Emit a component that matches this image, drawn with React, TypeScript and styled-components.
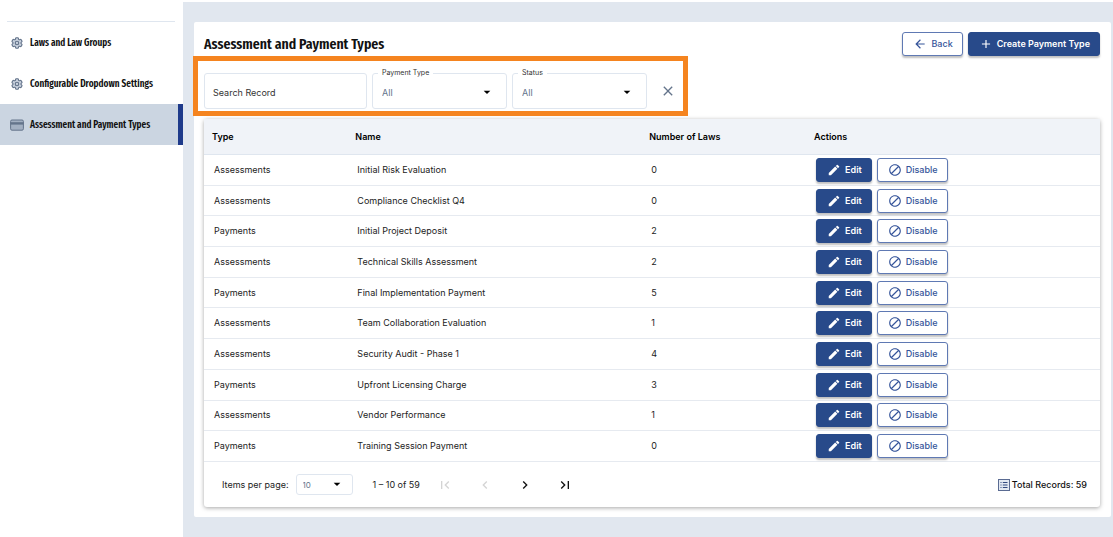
import React from "react";
import styled, { createGlobalStyle, css } from "styled-components";
import { HiOutlineCog6Tooth } from "react-icons/hi2";
import {
  MdAdd,
  MdArrowBack,
  MdArrowDropDown,
  MdBlock,
  MdChevronLeft,
  MdChevronRight,
  MdClose,
  MdEdit,
  MdFirstPage,
  MdLastPage,
} from "react-icons/md";

const navy = "#284a8a";
const line = "#dfe6ef";
const slate = "#64748b";
const headingFont = `"Fira Sans Extra Condensed", "Roboto Condensed", Roboto, sans-serif`;

const GlobalStyle = createGlobalStyle`
  *, *::before, *::after { box-sizing: border-box; }
  body {
    margin: 0;
    background: #fff;
    color: #222;
    font: 9px/12px Inter, "Liberation Sans", sans-serif;
  }
  button, input, select { font: inherit; }
`;

const Page = styled.div`
  display: flex;
  min-height: 100vh;
  padding-top: 2px;
`;

const Sidebar = styled.nav`
  flex: 0 0 183px;
  padding-top: 19px;
`;

const Divider = styled.hr`
  height: 1px;
  margin: 0 8px 0 7px;
  border: 0;
  background: ${line};
`;

const NavLink = styled.a<{ $active?: boolean }>`
  display: flex;
  align-items: center;
  gap: 6px;
  height: 41px;
  padding-left: 10px;
  border-right: 5px solid transparent;
  color: #111;
  font: 600 10px/14px ${headingFont};
  text-decoration: none;
  white-space: nowrap;
  ${(p) =>
    p.$active &&
    css`
      background: #cbd5e1;
      border-right-color: #1e3a8a;
    `}

  svg {
    width: 14px;
    height: 14px;
    color: ${slate};
    fill: #c9d2de;
    stroke-width: 2;
  }
`;

const Main = styled.main`
  flex: 1;
  min-width: 0;
  padding: 20px 2px 20px 11px;
  background: #e1e7ef;
`;

const Card = styled.section`
  padding: 10px 11px 10px 10px;
  border-radius: 2px;
  background: #fff;
`;

const TitleBar = styled.header`
  display: flex;
  align-items: center;
  justify-content: space-between;
`;

const Title = styled.h1`
  margin: 0;
  color: #111;
  font: 600 15px/20px ${headingFont};
`;

const ButtonGroup = styled.div`
  display: flex;
  gap: 5px;
`;

const Button = styled.button<{ $filled?: boolean }>`
  display: inline-flex;
  align-items: center;
  justify-content: center;
  gap: 4px;
  height: 24px;
  padding: 0 9px 0 10px;
  border: 1px solid ${(p) => (p.$filled ? navy : "#5f79b3")};
  border-radius: 3px;
  background: ${(p) => (p.$filled ? navy : "#fff")};
  color: ${(p) => (p.$filled ? "#fff" : "#35549a")};
  font-weight: ${(p) => (p.$filled ? 600 : 500)};
  white-space: nowrap;
  box-shadow: 0 2px 2px rgba(0, 0, 0, 0.25);

  svg {
    width: 14px;
    height: 14px;
  }
`;

const Filters = styled.form`
  position: relative;
  display: flex;
  align-items: center;
  gap: 5px;
  width: max-content;
  margin: 17px 0 10px;

  &::after {
    content: "";
    position: absolute;
    inset: -17px -12px -7px -11px;
    border: 5px solid #f5841f;
    pointer-events: none;
  }
`;

const SearchInput = styled.input`
  width: 163px;
  height: 36px;
  padding: 2px 8px 0;
  border: 1px solid ${line};
  border-radius: 3px;
  color: #222;

  &::placeholder {
    color: #333;
    opacity: 1;
  }
`;

const SelectBox = styled.div<{ $small?: boolean }>`
  position: relative;
  width: ${(p) => (p.$small ? 57 : 135)}px;

  select {
    display: block;
    width: 100%;
    height: ${(p) => (p.$small ? 21 : 36)}px;
    padding: ${(p) => (p.$small ? "0 6px" : "4px 9px 0")};
    border: 1px solid ${line};
    border-radius: 3px;
    appearance: none;
    background: #fff;
    color: ${slate};
    font-size: ${(p) => (p.$small ? 8 : 9)}px;
  }

  svg {
    position: absolute;
    top: 50%;
    right: ${(p) => (p.$small ? 8 : 12)}px;
    width: 16px;
    height: 16px;
    margin-top: ${(p) => (p.$small ? -9 : -7)}px;
    color: #000;
    pointer-events: none;
  }
`;

const FloatingLabel = styled.label`
  position: absolute;
  top: -5px;
  left: 6px;
  padding: 0 4px;
  background: #fff;
  color: #333;
  font-size: 7px;
  line-height: 10px;
`;

const IconButton = styled.button`
  display: inline-flex;
  align-items: center;
  justify-content: center;
  width: 16px;
  height: 16px;
  padding: 0;
  border: 0;
  background: none;
  color: #111;

  &:disabled {
    color: #d4d4d4;
  }

  svg {
    width: 16px;
    height: 16px;
  }
`;

const ClearButton = styled(IconButton)`
  margin-left: 8px;
  color: ${slate};
`;

const TablePanel = styled.div`
  border-radius: 3px;
  box-shadow: 0 1px 4px rgba(0, 0, 0, 0.35);
`;

const Table = styled.table`
  width: 100%;
  height: 343px;
  border-collapse: separate;
  border-spacing: 0;
  table-layout: fixed;
`;

const HeadCell = styled.th<{ $width?: string }>`
  width: ${(p) => p.$width || "auto"};
  height: 36px;
  padding: 0 8px;
  border-bottom: 1px solid ${line};
  background: #f0f3f8;
  color: #000;
  font-weight: 600;
  text-align: left;
`;

const Cell = styled.td`
  height: 30px;
  padding: 0 10px;
  border-bottom: 1px solid #e6eaf0;
`;

const Paginator = styled.footer`
  display: flex;
  align-items: center;
  height: 45px;
  padding: 0 13px 0 18px;
`;

const PageSizeLabel = styled.label`
  margin-right: 7px;
`;

const Range = styled.span`
  margin: 0 17px 0 20px;
`;

const PageButtons = styled.div`
  display: flex;
  gap: 24px;
`;

const Total = styled.span`
  display: flex;
  align-items: center;
  gap: 2px;
  margin-left: auto;
  color: #111;
  font-weight: 500;
`;

const rows = [
  ["Assessments", "Initial Risk Evaluation", 0],
  ["Assessments", "Compliance Checklist Q4", 0],
  ["Payments", "Initial Project Deposit", 2],
  ["Assessments", "Technical Skills Assessment", 2],
  ["Payments", "Final Implementation Payment", 5],
  ["Assessments", "Team Collaboration Evaluation", 1],
  ["Assessments", "Security Audit - Phase 1", 4],
  ["Payments", "Upfront Licensing Charge", 3],
  ["Assessments", "Vendor Performance", 1],
  ["Payments", "Training Session Payment", 0],
] as const;

function CardIcon() {
  return (
    <svg viewBox="0 0 14 14" aria-hidden="true">
      <rect x="0.6" y="2" width="12.8" height="10.2" rx="1.4" fill="#a3b0c2" stroke="#64748b" strokeWidth="1" />
      <rect x="0.6" y="4.2" width="12.8" height="2.4" fill="#64748b" stroke="none" />
    </svg>
  );
}

function ListIcon() {
  return (
    <svg width="12" height="12" viewBox="0 0 12 12" aria-hidden="true">
      <rect x="0.5" y="0.5" width="11" height="11" fill="#e3e9f3" stroke="#5a6b92" />
      <path d="M2.5 3.5h1M2.5 6h1M2.5 8.5h1M4.8 3.5h4.7M4.8 6h4.7M4.8 8.5h4.7" stroke="#334a80" strokeWidth="1" />
    </svg>
  );
}

function FilterSelect({ id, label }: { id: string; label: string }) {
  return (
    <SelectBox>
      <select id={id}>
        <option>All</option>
      </select>
      <FloatingLabel htmlFor={id}>{label}</FloatingLabel>
      <MdArrowDropDown />
    </SelectBox>
  );
}

export default function App() {
  return (
    <>
      <GlobalStyle />
      <Page>
        <Sidebar>
          <Divider />
          <NavLink href="#laws"><HiOutlineCog6Tooth />Laws and Law Groups</NavLink>
          <NavLink href="#dropdowns"><HiOutlineCog6Tooth />Configurable Dropdown Settings</NavLink>
          <NavLink href="#types" $active aria-current="page"><CardIcon />Assessment and Payment Types</NavLink>
        </Sidebar>
        <Main>
          <Card>
            <TitleBar>
              <Title>Assessment and Payment Types</Title>
              <ButtonGroup>
                <Button type="button"><MdArrowBack />Back</Button>
                <Button type="button" $filled><MdAdd />Create Payment Type</Button>
              </ButtonGroup>
            </TitleBar>
            <Filters>
              <SearchInput type="text" aria-label="Search Record" placeholder="Search Record" />
              <FilterSelect id="payment-type" label="Payment Type" />
              <FilterSelect id="status" label="Status" />
              <ClearButton type="reset" aria-label="Clear filters"><MdClose /></ClearButton>
            </Filters>
            <TablePanel>
              <Table>
                <thead>
                  <tr>
                    <HeadCell $width="16%">Type</HeadCell>
                    <HeadCell $width="32.8%">Name</HeadCell>
                    <HeadCell $width="18.4%">Number of Laws</HeadCell>
                    <HeadCell>Actions</HeadCell>
                  </tr>
                </thead>
                <tbody>
                  {rows.map(([type, name, count]) => (
                    <tr key={name}>
                      <Cell>{type}</Cell>
                      <Cell>{name}</Cell>
                      <Cell>{count}</Cell>
                      <Cell>
                        <ButtonGroup>
                          <Button type="button" $filled><MdEdit />Edit</Button>
                          <Button type="button"><MdBlock />Disable</Button>
                        </ButtonGroup>
                      </Cell>
                    </tr>
                  ))}
                </tbody>
              </Table>
              <Paginator>
                <PageSizeLabel htmlFor="page-size">Items per page:</PageSizeLabel>
                <SelectBox $small>
                  <select id="page-size">
                    <option>10</option>
                  </select>
                  <MdArrowDropDown />
                </SelectBox>
                <Range>1 – 10 of 59</Range>
                <PageButtons>
                  <IconButton type="button" disabled aria-label="First page"><MdFirstPage /></IconButton>
                  <IconButton type="button" disabled aria-label="Previous page"><MdChevronLeft /></IconButton>
                  <IconButton type="button" aria-label="Next page"><MdChevronRight /></IconButton>
                  <IconButton type="button" aria-label="Last page"><MdLastPage /></IconButton>
                </PageButtons>
                <Total><ListIcon />Total Records: 59</Total>
              </Paginator>
            </TablePanel>
          </Card>
        </Main>
      </Page>
    </>
  );
}
